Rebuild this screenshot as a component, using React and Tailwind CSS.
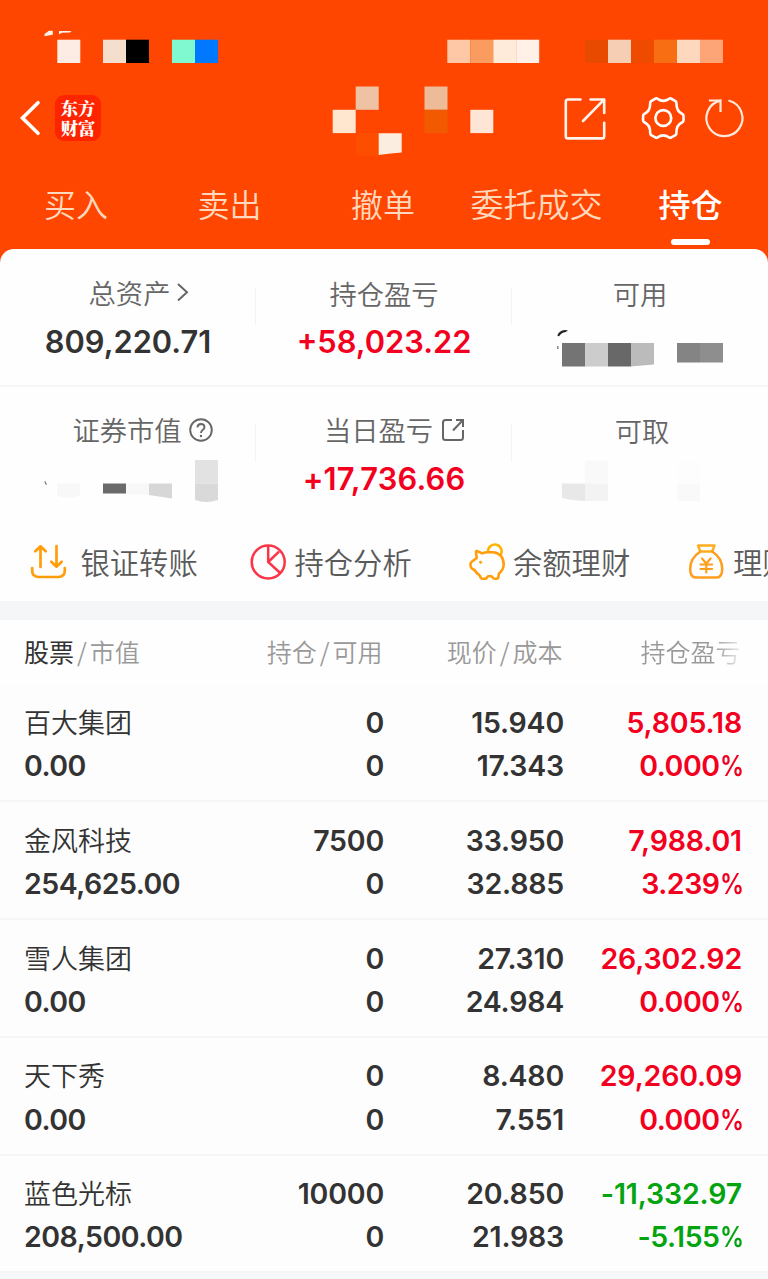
import React from 'react';

const statusBlocks = [
  [57.3, 23, '#fdece4'], [103, 23, '#f6decd'], [126, 23, '#000000'],
  [172, 23, '#80f8d0'], [195, 23, '#0078ff'],
  [447.3, 23, '#fec8a6'], [470.3, 23, '#fa9b5f'], [493.3, 23, '#feebda'], [516.2, 23, '#fff1e8'],
  [585, 23, '#e84a00'], [608, 23, '#f5ceb4'], [631, 23, '#ee4a00'],
  [654, 23, '#f76e13'], [677, 23, '#fed7bf'], [700, 23, '#fda577'],
];

function StatusBar() {
  return (
    <svg className="block h-[76px] w-[768px]" viewBox="0 0 768 76">
      <path d="M44.500 36.300v-2.300l4.500-3.300h3.800v4l-4.500.8z" fill="#fff1e8" />
      <path d="M59 31h12.500l-1.500 1.500-8 .3-3 1.500z" fill="#fff1e8" />
      {statusBlocks.map(([x, w, fill]) => (
        <rect key={x} x={x} y="39.700" width={w} height="23.300" fill={fill} />
      ))}
    </svg>
  );
}

function AccountMask() {
  return (
    <svg className="block h-[76px] w-[166px]" viewBox="330 84 166 76">
      <rect x="355.700" y="86.500" width="23" height="23.300" fill="#efc2a3" />
      <rect x="332.700" y="109.800" width="23" height="23.300" fill="#ffe6cf" />
      <rect x="424.500" y="86.500" width="23" height="23.300" fill="#eebb98" />
      <rect x="424.500" y="109.800" width="23" height="23.300" fill="#f15a00" />
      <rect x="470.300" y="109.800" width="23" height="23.300" fill="#ffe5d5" />
      <rect x="355.700" y="133" width="23" height="22.500" fill="#fd4e00" />
      <path d="M378.700 133.200h23v19.200l-11 1.100-12 1.500z" fill="#fbeddf" />
    </svg>
  );
}

function TitleBar() {
  return (
    <div className="flex h-[88px] items-center">
      <svg className="ml-[18px] h-[88px] w-[26px]" viewBox="18 76 26 88" fill="none" stroke="#fff" strokeWidth="3.600">
        <path d="M38 102.700L22.500 118 38 133.300" strokeLinecap="round" />
      </svg>
      <div className="mt-[-4px] ml-[11px] flex h-[46px] w-[46px] flex-col items-center justify-center rounded-[9px] bg-[#ff2400] pb-px font-['Noto_Serif_CJK_SC','Noto_Sans_CJK_SC',serif] text-[17.300px] leading-[19.500px] font-black text-white">
        <span>东方</span>
        <span>财富</span>
      </div>
      <div className="mt-1 ml-[229px]"><AccountMask /></div>
      <svg className="ml-[64px] h-[88px] w-[192px]" viewBox="560 76 192 88" fill="none" stroke="#fff" strokeLinecap="round" strokeLinejoin="round">
        <g strokeWidth="2.600" stroke="#fff4ee">
          <path d="M580.500 99.500h-12.500q-2.200 0-2.200 2.200v34.500q0 2.200 2.200 2.200h34q2.200 0 2.200-2.200v-13.500" />
          <path d="M590.500 99.500h13.700v13.500M604 99.700L583 121" />
        </g>
        <g strokeWidth="2.700">
          <circle cx="663.300" cy="118" r="7.900" />
          <path transform="translate(663.300 118) scale(.95 .99) translate(-663.300 -118.400)" d="M654.800 99q1.200-1 2.500 0 6 4 12 0 1.300-1 2.500 0l4.300 2.300q1.100.8 1 2.200-.2 8 6.200 10.800 1.300.6 1.300 2v4.400q0 1.400-1.300 2-6.400 2.700-6.200 10.800.1 1.400-1 2.200l-4.300 2.300q-1.200.8-2.500 0-6-4-12 0-1.300.8-2.500 0l-4.300-2.300q-1.100-.8-1-2.200.2-8-6.200-10.800-1.300-.6-1.300-2v-4.400q0-1.400 1.300-2 6.400-2.700 6.200-10.800-.1-1.400 1-2.200z" />
        </g>
        <g strokeWidth="2.200" stroke="#ffe9dc">
          <path d="M729.300 100.800A18 18 0 1 1 720.300 100.600" />
          <path d="M710 100.500h10.500v10.500" strokeLinecap="square" strokeLinejoin="miter" />
        </g>
      </svg>
    </div>
  );
}

function Tabs() {
  const tab = 'flex justify-center';
  return (
    <div className="flex h-[85px] pt-[16px] text-[32px] leading-[47px] font-[350] text-[#ffd8bd]">
      <div className={tab + ' w-[152px]'}>买入</div>
      <div className={tab + ' w-[155px]'}>卖出</div>
      <div className={tab + ' w-[152px]'}>撤单</div>
      <div className={tab + ' w-[155px] text-[33px]'}>委托成交</div>
      <div className="flex w-[153px] flex-col items-center font-medium text-white">
        <span>持仓</span>
        <span className="mt-[12px] h-[6px] w-[39px] rounded-full bg-white" />
      </div>
    </div>
  );
}

const num = "font-['Inter',sans-serif] font-[570]";

function Metric({ label, value, color, shift = '', children, divider = true }) {
  return (
    <div className="relative flex flex-1 flex-col items-center">
      <div className={'flex h-[36px] items-center text-[27.300px] font-[350] text-[#666] ' + shift}>{label}</div>
      {value && <div className={num + ' mt-[10px] text-[30.800px] leading-[42px] ' + color}>{value}</div>}
      {children}
      {divider && <span className="absolute top-[12px] right-0 h-[38px] w-px bg-[#f3f3f3]" />}
    </div>
  );
}

function Summary() {
  return (
    <div className="rounded-t-[14px] bg-[#fefefe]">
      <div className="flex h-[138px] border-b-2 border-[#f6f6f6] pt-[26px]">
        <Metric
          value="809,220.71"
          color="text-[#333]"
          shift="-mt-px mb-px pl-[22px]"
          label={<>总资产<svg className="ml-[5px] h-[22px] w-[14px]" viewBox="0 0 14 22" fill="none" stroke="#666" strokeWidth="2"><path d="M3 3l9 8.300-9 8.200" /></svg></>}
        />
        <Metric value="+58,023.22" color="text-[#f30020]" label="持仓盈亏" />
        <Metric label="可用" divider={false}>
          <svg className="mt-[10px] block h-[48px] w-[256px]" viewBox="512 321 256 48">
            <path d="M557.500 336q0-3 4-5.200 4-1.500 6.500 0l-3 1.500q-3 0-6 4z" fill="#222" />
            <rect x="557" y="346" width="1.500" height="3" fill="#888" />
            <rect x="562" y="343" width="23" height="23.500" fill="#747474" />
            <rect x="585" y="343" width="23" height="23.500" fill="#cccccc" />
            <rect x="608" y="343" width="23" height="23.500" fill="#686868" />
            <path d="M631 343h23v21.500l-12 1-11 1z" fill="#bbbbbb" />
            <rect x="677" y="343" width="23" height="19.500" fill="#848484" />
            <rect x="700" y="343" width="23" height="19.500" fill="#8e8e8e" />
          </svg>
        </Metric>
      </div>
      <div className="flex h-[137px] pt-[25px]">
        <Metric
          shift="-mt-px mb-px pl-[30px]"
          label={<>证券市值<svg className="ml-[6px] h-[26px] w-[26px]" viewBox="0 -1 26 26" fill="none" stroke="#666" strokeWidth="1.900"><circle cx="13" cy="13" r="10.800" /><path d="M9.400 10.400q.3-3.400 3.600-3.400t3.500 3q0 1.600-1.800 2.900-1.700 1.300-1.700 3.100" /><circle cx="13" cy="19" r=".6" fill="#666" strokeWidth="1.200" /></svg></>}
        >
          <svg className="block h-[60px] w-[256px]" viewBox="0 448 256 60">
            <path d="M45 481.500l1.200 3z" fill="#777" stroke="#777" />
            <path d="M57 483.500h23v12q-12 4-23 0z" fill="#f8f8f8" />
            <rect x="103" y="483.500" width="23" height="10" fill="#6a6a6a" />
            <rect x="126" y="483.500" width="23" height="11" fill="#f8f8f8" />
            <path d="M149 483.500h23v15l-23-3.500z" fill="#d7d7d7" />
            <rect x="195" y="460" width="23" height="23.500" fill="#e2e2e2" />
            <path d="M195 483.500h23V500q-12 4-23 0z" fill="#d9d9d9" />
          </svg>
        </Metric>
        <Metric
          value="+17,736.66"
          color="text-[#f30020] tracking-[0.200px]"
          shift="-mt-px mb-px pl-[21px]"
          label={<>当日盈亏<svg className="ml-[8px] h-[24px] w-[24px]" viewBox="0 -1 24 24" fill="none" stroke="#666" strokeWidth="2"><path d="M11 2H4.500Q2 2 2 4.500v15Q2 22 4.500 22h15q2.500 0 2.500-2.500V12M15 2h7v7M22 2L12 12.500" /></svg></>}
        />
        <Metric label="可取" shift="pl-[4px]" divider={false}>
          <svg className="block h-[60px] w-[256px]" viewBox="512 448 256 60">
            <rect x="585" y="460.500" width="23" height="23" fill="#f9f9f9" />
            <path d="M562 483.500h23V501q-12 0-23-3z" fill="#e8e8e8" />
            <rect x="585" y="483.500" width="23" height="17.500" fill="#f3f3f3" />
            <rect x="677" y="460.500" width="23" height="23" fill="#fdfdfd" />
            <rect x="677" y="483.500" width="23" height="17.500" fill="#f9f9f9" />
          </svg>
        </Metric>
      </div>
    </div>
  );
}

function TransferIcon() {
  return (
    <svg className="h-[38px] w-[38px]" viewBox="29 543 38 38" fill="none" stroke="#ff9d0a" strokeWidth="2.700" strokeLinecap="round" strokeLinejoin="round">
      <path d="M40.500 567v-20.500M35.300 551.300l5.200-5 5.200 5M56.500 546v20.500M51.300 561.700l5.200 5 5.200-5" />
      <path d="M32.200 568v2.500q0 6.500 6.500 6.500h19.600q6.500 0 6.500-6.500V568" />
    </svg>
  );
}

function PieIcon() {
  return (
    <svg className="h-[38px] w-[38px]" viewBox="248.500 543 38 38" fill="none" stroke="#fb3548" strokeWidth="2.500">
      <circle cx="267.700" cy="562" r="16.500" />
      <path d="M267.700 545.500V562l12 11M267.700 562l10.800-10.300" />
    </svg>
  );
}

function PiggyIcon() {
  return (
    <svg className="h-[38px] w-[38px]" viewBox="468 543 38 38" fill="none" stroke="#ff9d0a" strokeWidth="2.600" strokeLinecap="round" strokeLinejoin="round">
      <path d="M488 551.500a6.800 6.800 0 1 1 12.500 3.500" stroke="#ffb400" />
      <path d="M476 551.700q.2-1.200 1.500-.5l4.500 2.200q2.500-1.200 6-1.200h5.500q10 1.500 10.200 12.300-.2 5.500-4.700 9l-.7 4q-.2 1.200-1.500 1.200h-2.500q-1.200 0-1.700-1.300-.4-1.200-1.600-1.200h-2.500q-1.100 0-1.500 1.200-.4 1.300-1.700 1.300h-3q-1.100 0-1.600-1l-1.200-2.500q-3.500-2.500-5-5.200l-2.200-1.200q-1.800-1.200-1.800-3.500v-1.200q0-1.500 1.200-2.300l5-3.800z" />
      <circle cx="480.600" cy="562.300" r="1.100" fill="#ffae12" strokeWidth="1" />
    </svg>
  );
}

function BagIcon() {
  return (
    <svg className="h-[38px] w-[38px]" viewBox="687 543 38 38" fill="none" stroke="#ff9d1c" strokeWidth="2.500" strokeLinecap="round" strokeLinejoin="round">
      <path d="M698 545.600h16.500l-2.300 5.900h-11.800z" stroke="#ffac1c" />
      <path d="M700.400 551.500q-10.200 6.500-10.200 17.500 0 8.500 5.500 8.500h21q5.500 0 5.500-8.500 0-11-10-17.500" />
      <path d="M702 558.500l4.300 5 4.300-5M700.500 564.500h11.600M700.500 569h11.600M706.300 564v8.500" strokeWidth="2.200" />
    </svg>
  );
}

function Actions() {
  return (
    <div className="flex h-[77px] overflow-hidden bg-[#fefefe] text-[29.300px] leading-[44px] font-[350] whitespace-nowrap text-[#5a5a5a]">
      {[
        [TransferIcon, '银证转账', 'w-[219.500px] pl-[28.500px] gap-[14px]'],
        [PieIcon, '持仓分析', 'w-[219.500px] pl-[29px] gap-[8px]'],
        [PiggyIcon, '余额理财', 'w-[219px] pl-[29px] gap-[7px]'],
        [BagIcon, '理财', 'w-[219px] pl-[29px] gap-[8px]'],
      ].map(([Icon, text, cls], i) => (
        <div key={i} className={'flex h-[76px] shrink-0 items-center ' + cls}>
          <Icon />
          <span className="-mt-[3px]">{text}</span>
        </div>
      ))}
    </div>
  );
}

const grid = 'grid grid-cols-[200px_160px_180px_179px] pl-[24px]';

function Slash() {
  return <span className="mx-[3px]">/</span>;
}

function TableHead() {
  return (
    <div className={grid + ' h-[64.500px] bg-[#fefefe] text-[25px] leading-[63px] font-[350] text-[#999]'}>
      <div><span className="font-normal text-[#333]">股票</span><Slash />市值</div>
      <div className="pr-[1.500px] text-right">持仓<Slash />可用</div>
      <div className="pr-[1.500px] text-right">现价<Slash />成本</div>
      <div className="bg-linear-to-r from-[#999] from-[97px] via-[#999] via-[150px] to-[#f4f4f4] bg-clip-text pr-[2.500px] text-right text-transparent">持仓盈亏</div>
    </div>
  );
}

const rows = [
  ['百大集团', '0.00', '0', '0', '15.940', '17.343', '5,805.18', '0.000%'],
  ['金风科技', '254,625.00', '7500', '0', '33.950', '32.885', '7,988.01', '3.239%'],
  ['雪人集团', '0.00', '0', '0', '27.310', '24.984', '26,302.92', '0.000%'],
  ['天下秀', '0.00', '0', '0', '8.480', '7.551', '29,260.09', '0.000%'],
  ['蓝色光标', '208,500.00', '10000', '0', '20.850', '21.983', '-11,332.97', '-5.155%'],
];

function Row({ row }) {
  const [name, value, held, avail, price, cost, gain, pct] = row;
  const tone = gain.startsWith('-') ? 'text-[#04a410]' : 'text-[#f30020]';
  return (
    <div className={grid + ' h-[117.800px] border-b-2 border-[#f6f6f6] bg-[#fdfdfd] pt-[16.500px] text-[28.500px] leading-[43.300px] text-[#333] ' + num}>
      <div>
        <div className="h-[43.300px] font-['Noto_Sans_CJK_SC',sans-serif] text-[27px] leading-[42px] font-[350]">{name}</div>
        <div className="tracking-[-0.500px]">{value}</div>
      </div>
      <div className="text-right tracking-[-0.200px]"><div>{held}</div><div>{avail}</div></div>
      <div className="text-right tracking-[-0.200px]"><div>{price}</div><div>{cost}</div></div>
      <div className={'pr-px text-right ' + tone}>
        <div className="tracking-[-0.150px]">{gain}</div>
        <div className="pr-px tracking-[-0.500px]">{pct.slice(0, -1)}<span className="inline-block w-[21.500px] origin-left scale-x-[0.840] text-left">%</span></div>
      </div>
    </div>
  );
}

export default function App() {
  return (
    <div className="h-[1279px] w-[768px] overflow-hidden bg-[#f6f7f9] font-['Noto_Sans_CJK_SC',sans-serif]">
      <div className="bg-[#ff4600]">
        <StatusBar />
        <TitleBar />
        <Tabs />
        <Summary />
      </div>
      <Actions />
      <div className="h-[19px] bg-[#f5f6f8]" />
      <TableHead />
      {rows.map((row) => <Row key={row[0]} row={row} />)}
    </div>
  );
}
